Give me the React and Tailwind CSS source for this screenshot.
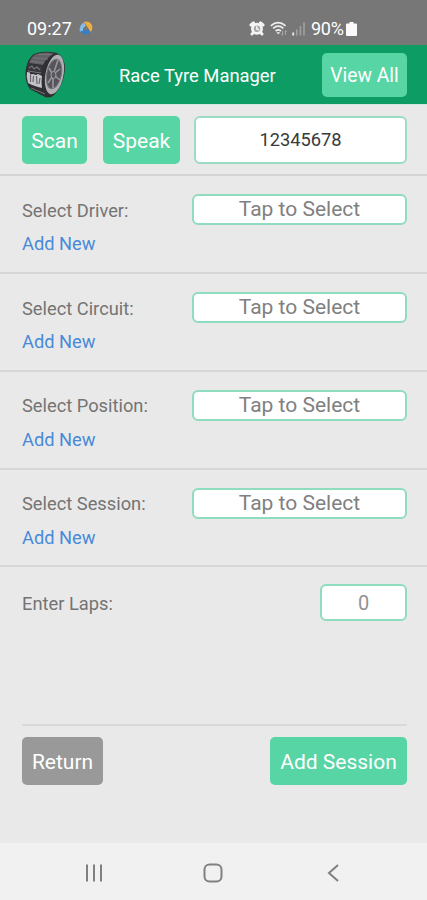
import React from "react";

function AlarmIcon() {
  return (
    <svg width="16" height="15" viewBox="0 0 16 15" className="shrink-0">
      <path d="M2 4L4.500 1.800M14 4L11.500 1.800M3 13l2-2M13 13l-2-2" stroke="#f4f4f4" strokeWidth="3" strokeLinecap="round" />
      <circle cx="8" cy="7.700" r="6" fill="#f4f4f4" />
      <circle cx="8" cy="7.700" r="3.300" fill="#a8a8a8" />
      <path d="M7.800 5.200v2.800l2.200.8" stroke="#fafafa" strokeWidth="1.400" fill="none" />
    </svg>
  );
}

function WifiIcon() {
  return (
    <svg width="19" height="16" viewBox="0 0 19 16" className="shrink-0" fill="none">
      <path d="M.8 4.800Q8-1.600 15.600 4.800M3.100 7.400Q8.200 3 13.400 7.400M5.600 10Q8.200 7.800 11 10" stroke="#ededed" strokeWidth="1.7" />
      <path d="M6.400 11.200h3.800l-1.900 2.400z" fill="#ededed" />
      <path d="M12.600 9.800v4.500M11.200 12.800l1.400 1.500M15.400 14v-4.500M16.800 11l-1.400-1.500" stroke="#a8a8a8" strokeWidth="1" />
    </svg>
  );
}

function SignalIcon() {
  return (
    <svg width="14" height="15" viewBox="0 0 14 15" className="shrink-0">
      <path d="M1.200 11.500v3" stroke="#eee" strokeWidth="1.8" />
      <path d="M4.800 8.500v6M8.400 5v9.500M12 1v13.500" stroke="#a0a0a0" strokeWidth="1.6" />
    </svg>
  );
}

function StatusBar() {
  return (
    <div className="flex h-[45px] items-center bg-[#777777] pt-[12px] pl-[27px] text-white">
      <span className="w-[45px] text-[18px] leading-none">09:27</span>
      <svg width="14" height="15" viewBox="0 0 14 15" className="ml-[7px] shrink-0">
        <path d="M4.500 1Q10-.5 12.700 3.500Q14.500 8 11.500 11.500Q10 8 8.500 6Q7 3 4.500 1Z" fill="#f2ae3c" />
        <path d="M1 11Q-.5 5.500 4.500 1.500L7 4.500Q3.500 6.500 4 10Z" fill="#83bdea" />
        <path d="M1 9.500Q5 11 8.500 8L12 11Q6 16.500 1 9.500Z" fill="#347fc5" />
      </svg>
      <div className="ml-[156px] flex items-center">
        <AlarmIcon />
        <span className="w-[5px]" />
        <WifiIcon />
        <span className="w-[3px]" />
        <SignalIcon />
        <span className="ml-[5px] w-[35px] text-[18px] leading-none tracking-[-0.3px]">90%</span>
        <svg width="11" height="14" viewBox="0 0 11 14" className="shrink-0">
          <path d="M3.500 0h4v1.500H10a1 1 0 0 1 1 1V13a1 1 0 0 1-1 1H1a1 1 0 0 1-1-1V2.500a1 1 0 0 1 1-1h2.500z" fill="#fafafa" />
        </svg>
      </div>
    </div>
  );
}

function TyreLogo() {
  return (
    <svg width="42" height="48" viewBox="0 0 42 48" className="shrink-0">
      <path d="M10 3Q20-1 33 2Q41 6 41 18Q40 33 31 43Q27 48 21 46L6 38Q0 30 2 17Q4 7 10 3Z" fill="#302f34" />
      <path d="M11 3.500Q20 0 30 2.500Q22 7 19 14L5 12Q7 6 11 3.500Z" fill="#626166" />
      <path d="M14 3.500h13M10 7l14 1M7 10l13 2" stroke="#77767a" strokeWidth="1" />
      <path d="M4 13l15 2-1 8-15-3z" fill="#37363b" />
      <path d="M5 17l3-2 2 3 3-2 3 3M4 20l13 2" stroke="#77757b" strokeWidth="1.200" fill="none" />
      <path d="M3 21l3 .5v2l3-.5 3 1 2-1 4 2q-1 6 0 12l-4-1-3-1-3-1L4 32Q2 26 3 21Z" fill="#c4c3c7" />
      <path d="M6.500 24v7M9.500 25l-.5 6M12.500 25l.5 8M16 27l-1 6" stroke="#6a696e" strokeWidth="1.200" />
      <path d="M7 37l14 6" stroke="#77767a" strokeWidth="1" />
      <ellipse cx="30.500" cy="23.500" rx="9" ry="20" transform="rotate(11 30.500 23.500)" fill="#b0afb3" />
      <ellipse cx="30" cy="23" rx="7.300" ry="15" transform="rotate(11 30 23)" fill="#55545a" stroke="#77767b" strokeWidth="1" />
      <path d="M30 21L34 9M31 22l5-4M31 25l5 4M29 26v11M28 26l-4 6M28 22l-3-5" stroke="#98969c" strokeWidth="1.600" />
      <ellipse cx="29.500" cy="24" rx="2.500" ry="3.500" fill="#58575c" stroke="#a09ea4" />
    </svg>
  );
}

function Header() {
  return (
    <header className="flex h-[59px] items-center bg-[#0c9c64] pl-[24px] text-white">
      <TyreLogo />
      <h1 className="ml-[53px] w-[203px] pt-[3px] text-[18.400px] leading-none">Race Tyre Manager</h1>
      <button className="h-[44px] w-[85px] rounded-[5px] bg-[#58d5a4] pt-[2px] text-[19.300px] leading-none">View All</button>
    </header>
  );
}

function SelectRow({ label }) {
  return (
    <section className="flex h-[97.750px] justify-between border-b-2 border-[#d7d7d7] pt-[18px] pr-[20px] pl-[22px]">
      <div className="flex flex-col items-start pt-[6.500px]">
        <label className="text-[18.300px] leading-[20px] text-[#747474]">{label}</label>
        <button className="mt-[13.500px] text-[18.300px] leading-[20px] text-[#488ada]">Add New</button>
      </div>
      <button className="h-[31px] w-[215px] rounded-[6px] border-2 border-[#8fdcbe] bg-white text-[21px] leading-none text-[#808080]">
        Tap to Select
      </button>
    </section>
  );
}

const actionButton = "h-[48px] rounded-[5px] pt-[2px] text-[21px] leading-none text-white";

export default function App() {
  return (
    <main className="flex h-[900px] w-[427px] flex-col overflow-hidden bg-[#e9e9e9] font-['Roboto',sans-serif]">
      <StatusBar />
      <Header />
      <div className="flex h-[72.250px] items-start border-t border-b-2 border-t-[#d5e8e0] border-b-[#d3d3d3] pt-[11px] pl-[22px]">
        <button className={`${actionButton} w-[65px] bg-[#58d5a4]`}>Scan</button>
        <button className={`${actionButton} ml-[16px] w-[77px] bg-[#58d5a4]`}>Speak</button>
        <div className="ml-[14px] flex h-[48px] w-[213px] items-center justify-center rounded-[6px] border-2 border-[#9cdcc3] bg-white pb-[1px] text-[18.300px] text-[#3a3a3a]">12345678</div>
      </div>
      <SelectRow label="Select Driver:" />
      <SelectRow label="Select Circuit:" />
      <SelectRow label="Select Position:" />
      <SelectRow label="Select Session:" />
      <div className="flex h-[156.750px] items-start justify-between pt-[17px] pr-[20px] pl-[22px]">
        <label className="mt-[10px] text-[18.300px] leading-[20px] text-[#747474]">Enter Laps:</label>
        <div className="flex h-[37px] w-[87px] items-center justify-center rounded-[6px] border-2 border-[#8fdcbe] bg-white text-[20px] text-[#929292]">0</div>
      </div>
      <footer className="mr-[20px] ml-[22px] flex h-[119px] items-start justify-between border-t-2 border-[#d9d9d9] pt-[11px]">
        <button className={`${actionButton} w-[81px] bg-[#999999]`}>Return</button>
        <button className={`${actionButton} w-[137px] bg-[#58d5a4]`}>Add Session</button>
      </footer>
      <nav className="flex flex-1 items-center bg-[#f1f1f1] pt-[2px] pl-[84px]">
        <svg width="20" height="20" viewBox="0 0 20 20" fill="none" stroke="#808080" strokeWidth="2">
          <path d="M3 1.500v17M10 1.500v17M17 1.500v17" />
        </svg>
        <svg width="20" height="20" viewBox="0 0 20 20" fill="none" stroke="#808080" strokeWidth="2" className="ml-[99px]">
          <rect x="1.500" y="1.500" width="17" height="17" rx="5" />
        </svg>
        <svg width="14" height="20" viewBox="0 0 14 20" fill="none" stroke="#808080" strokeWidth="2" className="ml-[103px]">
          <path d="M12 2L3 10l9 8" />
        </svg>
      </nav>
    </main>
  );
}
